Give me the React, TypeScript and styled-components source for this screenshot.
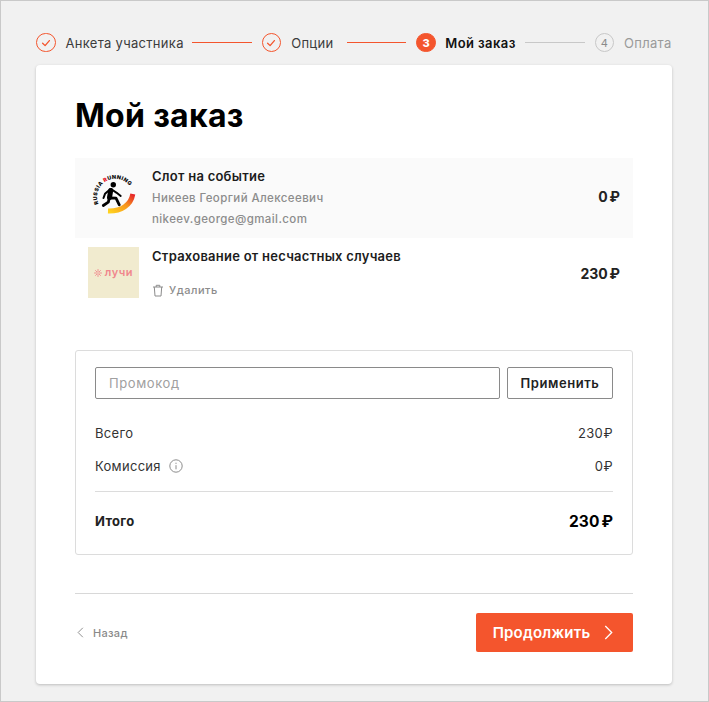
import React from "react";
import styled, { createGlobalStyle } from "styled-components";

const Global = createGlobalStyle`
  html, body { margin: 0; padding: 0; }
  body { font-family: Inter, "Noto Sans", sans-serif; color: #222; background: #f1f1f1; }
  * { box-sizing: border-box; }
`;
const Page = styled.div`
  width: 709px; height: 702px; background: #f1f1f1; border: 1px solid #c9c9c9; padding: 32px 36px 0 35px;
`;
const Stepper = styled.div`display: flex; align-items: center; height: 19px; margin-bottom: 13px;`;
const Circle = styled.span<{ $state: "done" | "active" | "todo" }>`
  width: 19.5px; height: 19.5px; border-radius: 50%; flex: none; display: flex; align-items: center; justify-content: center;
  font-size: 11px; font-weight: ${p => (p.$state === "active" ? 800 : 400)};
  color: ${p => (p.$state === "active" ? "#fff" : "#8a8a8a")};
  background: ${p => (p.$state === "active" ? "#f4552d" : "transparent")};
  border: 1px solid ${p => (p.$state === "todo" ? "#c8c8c8" : "#f4552d")};
`;
const StepLabel = styled.span<{ $state: "done" | "active" | "todo"; $w: number }>`
  width: ${p => p.$w}px; margin-left: ${p => (p.$state === "active" ? "9.5px" : "10px")}; flex: none; white-space: nowrap; font-size: 13px;
  letter-spacing: ${p => (p.$state === "active" ? "0.4px" : "0.3px")};
  font-weight: ${p => (p.$state === "active" ? 600 : 400)};
  color: ${p => (p.$state === "active" ? "#111" : p.$state === "todo" ? "#9a9a9a" : "#3c3c3c")};
`;
const StepLine = styled.span<{ $on?: boolean }>`
  flex: 1; height: 1px; margin: 0 ${p => (p.$on ? "10px" : "9.5px")} 0 9.5px; background: ${p => (p.$on ? "#f4552d" : "#c8c8c8")};
`;
const Card = styled.main`
  width: 636px; height: 619px; background: #fff; border-radius: 4px; box-shadow: 0 1px 3px rgba(0,0,0,.22); padding: 31px 39px 0;
`;
const Title = styled.h1`margin: 0 0 23px; font-size: 32px; line-height: 39px; font-weight: 700; color: #000; letter-spacing: 0.3px;`;
const Row = styled.div<{ $tint?: boolean; $h: number }>`
  display: flex; align-items: center; height: ${p => p.$h}px; padding: 0 13px; background: ${p => (p.$tint ? "#fafafa" : "#fff")};
`;
const Thumb = styled.div<{ $bg?: string; $top?: boolean }>`
  width: 51px; height: 51px; flex: none; background: ${p => p.$bg || "transparent"}; display: flex; align-items: center; justify-content: center; gap: 3px;
  align-self: ${p => (p.$top ? "flex-start" : "center")}; margin-top: ${p => (p.$top ? "9px" : "0")};
`;
const RowInfo = styled.div<{ $top?: boolean }>`
  flex: 1; margin-left: 13px; display: flex; flex-direction: column;
  align-self: ${p => (p.$top ? "flex-start" : "center")}; margin-top: ${p => (p.$top ? "10px" : "0")};
  padding-bottom: ${p => (p.$top ? "0" : "1px")};
`;
const RowTitle = styled.div`font-size: 13px; line-height: 16px; margin-bottom: 1px; font-weight: 600; color: #1c1c1c; letter-spacing: 0.25px;`;
const RowSub = styled.div`font-size: 11.5px; line-height: 15px; margin-top: 6px; font-weight: 500; color: #8c8c8c; letter-spacing: 0.4px;`;
const RowPrice = styled.div`font-size: 14px; font-weight: 700; color: #222; margin-bottom: 4px; word-spacing: -1.5px;`;
const DeleteLink = styled.div`display: flex; align-items: center; gap: 5px; margin-top: 17px; font-size: 11px; line-height: 16px; color: #8c8c8c; letter-spacing: .5px; font-weight: 500;`;
const LuchiText = styled.span`font-size: 11px; font-weight: 600; color: #f0868c; letter-spacing: .6px; padding-bottom: 2px;`;
const Summary = styled.section`
  margin-top: 38px; height: 205px; border: 1px solid #dcdcdc; border-radius: 3px; padding: 16px 19px 0;
`;
const PromoRow = styled.div`display: flex; gap: 7px; margin-bottom: 18px;`;
const PromoInput = styled.div`
  flex: 1; height: 32px; border: 1px solid #8a8a8a; border-radius: 2px; padding: 0 13px 1px; display: flex; align-items: center;
  font-size: 13px; color: #a0a0a0; letter-spacing: .6px;
`;
const ApplyBtn = styled.div`
  width: 106px; height: 32px; border: 1px solid #8a8a8a; border-radius: 2px; display: flex; align-items: center; justify-content: center;
  font-size: 13px; font-weight: 600; color: #222; letter-spacing: .55px;
`;
const SumRow = styled.div`display: flex; justify-content: space-between; align-items: center; height: 33px; padding-bottom: 2px; font-size: 13px; color: #333; letter-spacing: .3px; word-spacing: -3.5px;`;
const SumLabel = styled.span`display: flex; align-items: center; gap: 8px;`;
const SumDivider = styled.hr`border: 0; height: 1px; background: #dcdcdc; margin: 8px 0 0;`;
const TotalRow = styled.div`display: flex; justify-content: space-between; align-items: center; height: 58px;`;
const TotalLabel = styled.span`font-size: 13px; font-weight: 700; color: #222; letter-spacing: .3px;`;
const TotalValue = styled.span`font-size: 15.5px; font-weight: 700; color: #000; word-spacing: -1.5px;`;
const FootDivider = styled.hr`border: 0; height: 1px; background: #d8d8d8; margin: 38px 0 19px;`;
const Footer = styled.div`display: flex; justify-content: space-between; align-items: center;`;
const BackLink = styled.div`display: flex; align-items: center; gap: 9px; font-size: 11px; color: #8a8a8a; font-weight: 500; padding-left: 2px; letter-spacing: .3px;`;
const NextBtn = styled.div`
  width: 157px; height: 39px; background: #f4552d; border-radius: 2px; display: flex; align-items: center; justify-content: center; gap: 14px;
  color: #fff; font-size: 15px; font-weight: 600; letter-spacing: .2px; padding-right: 3px;
`;

const Check = () => (
  <svg width="12" height="12" viewBox="0 0 12 12" fill="none" stroke="#f4552d" strokeWidth="1.3" strokeLinecap="round" strokeLinejoin="round">
    <path d="M2.6 6.2 5.1 8.6 9.4 3.6" />
  </svg>
);

const RunningLogo = () => (
  <svg width="51" height="51" viewBox="0 0 51 51">
    <defs>
      <path id="rrArc" d="M10.5 31 A17 17 0 1 1 44 17" fill="none" />
      <linearGradient id="rrGrad" x1="0" y1="1" x2="1" y2="0">
        <stop offset="0" stopColor="#ffd21f" />
        <stop offset=".55" stopColor="#f7941d" />
        <stop offset="1" stopColor="#e5202a" />
      </linearGradient>
    </defs>
    <text fontFamily="Inter, sans-serif" fontSize="5.4" fontWeight="900" fill="#111" letterSpacing=".35">
      <textPath href="#rrArc">
        <tspan>RUSSIA </tspan><tspan fill="#e5202a">R</tspan><tspan>UNNING</tspan>
      </textPath>
    </text>
    <path d="M20 38 C33 38.5 43 32 44.8 21" fill="none" stroke="url(#rrGrad)" strokeWidth="5" />
    <circle cx="25.3" cy="11.8" r="2.7" fill="#000" />
    <g fill="none" stroke="#000" strokeLinecap="round" strokeLinejoin="round">
      <path d="M22.7 17.5 21.5 24.5" strokeWidth="5" />
      <path d="M23 16 28.7 19.8 32.7 23" strokeWidth="2" />
      <path d="M22.5 16 17 20.8 15.5 25" strokeWidth="2" />
      <path d="M21.5 25 28 25.2 31.3 31.8" strokeWidth="2.8" />
      <path d="M21.3 25.2 20.3 29.2 15.3 32.5" strokeWidth="2.8" />
    </g>
  </svg>
);

const Sun = () => (
  <svg width="8" height="8" viewBox="0 0 10 10" stroke="#f0868c" strokeWidth="1.1" strokeLinecap="round">
    <path d="M5 .6V3.4M5 6.6V9.4M.6 5H3.4M6.6 5H9.4M1.9 1.9 3.9 3.9M6.1 6.1 8.1 8.1M8.1 1.9 6.1 3.9M3.9 6.1 1.9 8.1" />
  </svg>
);

const Trash = () => (
  <svg width="12" height="13" viewBox="0 0 12 13" fill="none" stroke="#8c8c8c" strokeWidth="1" strokeLinejoin="round">
    <path d="M1 3H11M4.2 3V1.3H7.8V3M2.3 3 3 12H9L9.7 3" />
  </svg>
);

const Info = () => (
  <svg width="14" height="14" viewBox="0 0 14 14" fill="none" stroke="#8c8c8c">
    <circle cx="7" cy="7" r="6.2" />
    <path d="M7 6.2V10.3M7 3.7V4.9" />
  </svg>
);

const Chevron = ({ dir, color, w, h }: { dir: "l" | "r"; color: string; w: number; h: number }) => (
  <svg width={w} height={h} viewBox="0 0 8 14" fill="none" stroke={color} strokeWidth="1.2">
    <path d={dir === "l" ? "M7 1 1 7 7 13" : "M1 1 7 7 1 13"} />
  </svg>
);

export default function App() {
  return (
    <>
      <Global />
      <Page>
        <Stepper>
          <Circle $state="done"><Check /></Circle>
          <StepLabel $state="done" $w={117}>Анкета участника</StepLabel>
          <StepLine $on />
          <Circle $state="done"><Check /></Circle>
          <StepLabel $state="done" $w={46}>Опции</StepLabel>
          <StepLine $on />
          <Circle $state="active">3</Circle>
          <StepLabel $state="active" $w={70.5}>Мой заказ</StepLabel>
          <StepLine />
          <Circle $state="todo">4</Circle>
          <StepLabel $state="todo" $w={48}>Оплата</StepLabel>
        </Stepper>
        <Card>
          <Title>Мой заказ</Title>
          <Row $tint $h={80}>
            <Thumb><RunningLogo /></Thumb>
            <RowInfo>
              <RowTitle>Слот на событие</RowTitle>
              <RowSub>Никеев Георгий Алексеевич</RowSub>
              <RowSub>nikeev.george@gmail.com</RowSub>
            </RowInfo>
            <RowPrice>0 ₽</RowPrice>
          </Row>
          <Row $h={74}>
            <Thumb $bg="#f1ebcf" $top><Sun /><LuchiText>лучи</LuchiText></Thumb>
            <RowInfo $top>
              <RowTitle>Страхование от несчастных случаев</RowTitle>
              <DeleteLink><Trash />Удалить</DeleteLink>
            </RowInfo>
            <RowPrice>230 ₽</RowPrice>
          </Row>
          <Summary>
            <PromoRow>
              <PromoInput>Промокод</PromoInput>
              <ApplyBtn>Применить</ApplyBtn>
            </PromoRow>
            <SumRow><span>Всего</span><span>230 ₽</span></SumRow>
            <SumRow><SumLabel>Комиссия <Info /></SumLabel><span>0 ₽</span></SumRow>
            <SumDivider />
            <TotalRow><TotalLabel>Итого</TotalLabel><TotalValue>230 ₽</TotalValue></TotalRow>
          </Summary>
          <FootDivider />
          <Footer>
            <BackLink><Chevron dir="l" color="#8a8a8a" w={7} h={11} />Назад</BackLink>
            <NextBtn>Продолжить <Chevron dir="r" color="#fff" w={9} h={15} /></NextBtn>
          </Footer>
        </Card>
      </Page>
    </>
  );
}
